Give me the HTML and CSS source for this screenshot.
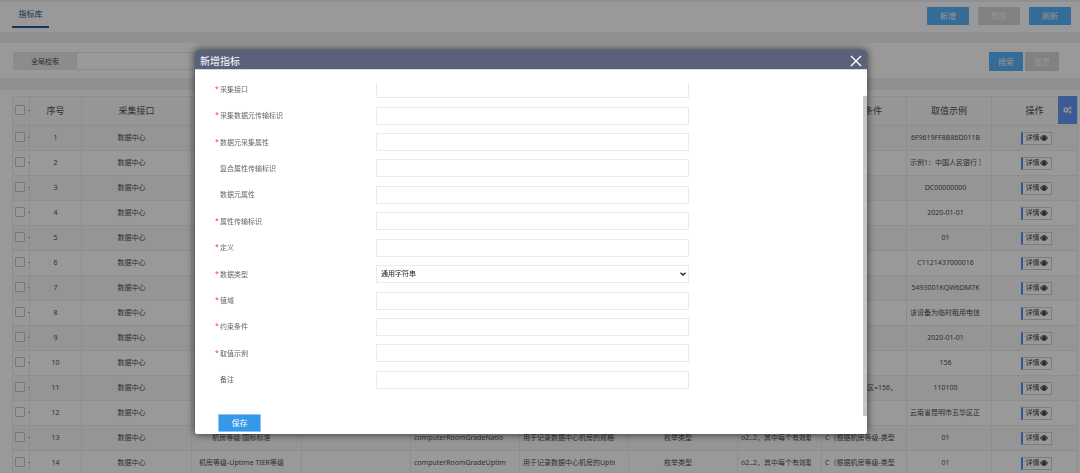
FILE: index.html
```
<!DOCTYPE html>
<html lang="zh-CN">
<head>
<meta charset="utf-8">
<title>指标库</title>
<link rel="stylesheet" href="styles.css">
</head>
<body>
<svg class="sprite" aria-hidden="true">
  <symbol id="eye" viewBox="0 0 16 12">
    <path d="M0 6C3 1.500 5.500 .5 8 .5S13 1.500 16 6c-3 4.500-5.500 5.500-8 5.500S3 10.500 0 6z" fill="currentColor"/>
    <path d="M4.500 2.500C2.500 4.500 2.500 7.500 4.500 9.500M11.500 2.500c2 2 2 5 0 7" fill="none" stroke="#fff" stroke-width="1.300"/>
    <path d="M6 5a2 2 0 0 1 2-2" fill="none" stroke="#fff" stroke-width="1"/>
  </symbol>
  <symbol id="cogs" viewBox="0 0 18 16">
    <g fill="none" stroke="currentColor">
      <circle cx="6" cy="8" r="3.500" stroke-width="2.600"/>
      <circle cx="6" cy="8" r="5.200" stroke-width="1.600" stroke-dasharray="2 2.084"/>
      <circle cx="14.300" cy="3.600" r="1.900" stroke-width="1.600"/>
      <circle cx="14.300" cy="3.600" r="3" stroke-width="1" stroke-dasharray="1.500 1.642"/>
      <circle cx="14.300" cy="12.400" r="1.900" stroke-width="1.600"/>
      <circle cx="14.300" cy="12.400" r="3" stroke-width="1" stroke-dasharray="1.500 1.642"/>
    </g>
  </symbol>
</svg>

<div class="page">
  <header class="topbar">
    <a class="tab" href="#">指标库</a>
    <div class="actions">
      <button class="btn" type="button">新增</button>
      <button class="btn btn-off" type="button">删除</button>
      <button class="btn" type="button">刷新</button>
    </div>
  </header>

  <form class="search">
    <label class="search-label" for="keyword">全局检索</label>
    <input class="search-input" id="keyword" type="text">
    <div class="search-actions">
      <button class="btn btn-search" type="button">搜索</button>
      <button class="btn btn-search btn-off" type="button">重置</button>
    </div>
  </form>

  <main class="list">
    <table class="grid">
      <colgroup>
        <col class="c-check"><col class="c-no"><col class="c-wide"><col class="c-wide"><col class="c-mid"><col class="c-mid"><col class="c-mid"><col class="c-mid"><col class="c-range"><col class="c-small"><col class="c-small"><col class="c-op">
      </colgroup>
      <thead>
        <tr><th class="check"><input type="checkbox" aria-label="全选">.</th><th>序号</th><th>采集接口</th><th></th><th></th><th></th><th></th><th></th><th></th><th>约束条件</th><th>取值示例</th><th>操作</th></tr>
      </thead>
      <tbody>
        <tr><td class="check"><input type="checkbox" aria-label="选择1">.</td><td class="no">1</td><td>数据中心</td><td></td><td></td><td></td><td></td><td></td><td></td><td></td><td class="s">6F9619FF8B86D011B</td><td class="op"><button type="button" class="detail">详情<svg><use href="#eye"/></svg></button></td></tr>
        <tr><td class="check"><input type="checkbox" aria-label="选择2">.</td><td class="no">2</td><td>数据中心</td><td></td><td></td><td></td><td></td><td></td><td></td><td></td><td class="s"><div class="clip">示例1：中国人民银行 清算</div></td><td class="op"><button type="button" class="detail">详情<svg><use href="#eye"/></svg></button></td></tr>
        <tr><td class="check"><input type="checkbox" aria-label="选择3">.</td><td class="no">3</td><td>数据中心</td><td></td><td></td><td></td><td></td><td></td><td></td><td></td><td class="s">DC00000000</td><td class="op"><button type="button" class="detail">详情<svg><use href="#eye"/></svg></button></td></tr>
        <tr><td class="check"><input type="checkbox" aria-label="选择4">.</td><td class="no">4</td><td>数据中心</td><td></td><td></td><td></td><td></td><td></td><td></td><td></td><td class="s">2020-01-01</td><td class="op"><button type="button" class="detail">详情<svg><use href="#eye"/></svg></button></td></tr>
        <tr><td class="check"><input type="checkbox" aria-label="选择5">.</td><td class="no">5</td><td>数据中心</td><td></td><td></td><td></td><td></td><td></td><td></td><td></td><td class="s">01</td><td class="op"><button type="button" class="detail">详情<svg><use href="#eye"/></svg></button></td></tr>
        <tr><td class="check"><input type="checkbox" aria-label="选择6">.</td><td class="no">6</td><td>数据中心</td><td></td><td></td><td></td><td></td><td></td><td></td><td></td><td class="s">C1121437000016</td><td class="op"><button type="button" class="detail">详情<svg><use href="#eye"/></svg></button></td></tr>
        <tr><td class="check"><input type="checkbox" aria-label="选择7">.</td><td class="no">7</td><td>数据中心</td><td></td><td></td><td></td><td></td><td></td><td></td><td></td><td class="s">5493001KQW6DM7K</td><td class="op"><button type="button" class="detail">详情<svg><use href="#eye"/></svg></button></td></tr>
        <tr><td class="check"><input type="checkbox" aria-label="选择8">.</td><td class="no">8</td><td>数据中心</td><td></td><td></td><td></td><td></td><td></td><td></td><td></td><td class="s"><div class="clip">该设备为临时租用电信</div></td><td class="op"><button type="button" class="detail">详情<svg><use href="#eye"/></svg></button></td></tr>
        <tr><td class="check"><input type="checkbox" aria-label="选择9">.</td><td class="no">9</td><td>数据中心</td><td></td><td></td><td></td><td></td><td></td><td></td><td></td><td class="s">2020-01-01</td><td class="op"><button type="button" class="detail">详情<svg><use href="#eye"/></svg></button></td></tr>
        <tr><td class="check"><input type="checkbox" aria-label="选择10">.</td><td class="no">10</td><td>数据中心</td><td></td><td></td><td></td><td></td><td></td><td></td><td></td><td class="s">156</td><td class="op"><button type="button" class="detail">详情<svg><use href="#eye"/></svg></button></td></tr>
        <tr><td class="check"><input type="checkbox" aria-label="选择11">.</td><td class="no">11</td><td>数据中心</td><td></td><td></td><td></td><td></td><td></td><td></td><td class="s"><div class="clip">C（若国家/地区=156，</div></td><td class="s">110100</td><td class="op"><button type="button" class="detail">详情<svg><use href="#eye"/></svg></button></td></tr>
        <tr><td class="check"><input type="checkbox" aria-label="选择12">.</td><td class="no">12</td><td>数据中心</td><td></td><td></td><td></td><td></td><td></td><td></td><td></td><td class="s"><div class="clip">云南省昆明市五华区正</div></td><td class="op"><button type="button" class="detail">详情<svg><use href="#eye"/></svg></button></td></tr>
        <tr><td class="check"><input type="checkbox" aria-label="选择13">.</td><td class="no">13</td><td>数据中心</td><td>机房等级-国标标准</td><td></td><td><div class="clip">computerRoomGradeNatio</div></td><td><div class="clip">用于记录数据中心机房的规格等级</div></td><td>枚举类型</td><td class="s"><div class="clip">o2..2，其中每个有效取值</div></td><td class="s"><div class="clip">C（根据机房等级-类型</div></td><td class="s">01</td><td class="op"><button type="button" class="detail">详情<svg><use href="#eye"/></svg></button></td></tr>
        <tr><td class="check"><input type="checkbox" aria-label="选择14">.</td><td class="no">14</td><td>数据中心</td><td>机房等级-Uptime TIER等级</td><td></td><td><div class="clip">computerRoomGradeUptime</div></td><td><div class="clip">用于记录数据中心机房的Uptime</div></td><td>枚举类型</td><td class="s"><div class="clip">o2..2，其中每个有效取值</div></td><td class="s"><div class="clip">C（根据机房等级-类型</div></td><td class="s">01</td><td class="op"><button type="button" class="detail">详情<svg><use href="#eye"/></svg></button></td></tr>
      </tbody>
    </table>
    <button class="columns" type="button" aria-label="列设置"><svg><use href="#cogs"/></svg></button>
  </main>
</div>

<div class="overlay">
  <section class="dialog" role="dialog" aria-labelledby="dialog-title">
    <header class="dialog-head">
      <h2 id="dialog-title">新增指标</h2>
      <button class="close" type="button" aria-label="关闭"><svg viewBox="0 0 12 12"><path d="M1 1l10 10M11 1L1 11" fill="none" stroke="#fff" stroke-width="1.400"/></svg></button>
    </header>
    <form class="dialog-form">
      <div class="viewport">
        <div class="fields">
          <div class="field"><label class="req" for="f1">采集接口</label><input id="f1" type="text"></div>
          <div class="field"><label class="req" for="f2">采集数据元传输标识</label><input id="f2" type="text"></div>
          <div class="field"><label class="req" for="f3">数据元采集属性</label><input id="f3" type="text"></div>
          <div class="field"><label for="f4">复合属性传输标识</label><input id="f4" type="text"></div>
          <div class="field"><label for="f5">数据元属性</label><input id="f5" type="text"></div>
          <div class="field"><label class="req" for="f6">属性传输标识</label><input id="f6" type="text"></div>
          <div class="field"><label class="req" for="f7">定义</label><input id="f7" type="text"></div>
          <div class="field"><label class="req" for="f8">数据类型</label>
            <div class="select"><select id="f8"><option>通用字符串</option></select><svg viewBox="0 0 6 4"><path d="M.5 .7L3 3 5.500 .7" fill="none" stroke="#222" stroke-width="1.300"/></svg></div></div>
          <div class="field"><label class="req" for="f9">值域</label><input id="f9" type="text"></div>
          <div class="field"><label class="req" for="f10">约束条件</label><input id="f10" type="text"></div>
          <div class="field"><label class="req" for="f11">取值示例</label><input id="f11" type="text"></div>
          <div class="field"><label for="f12">备注</label><input id="f12" type="text"></div>
        </div>
      </div>
      <div class="foot"><button class="save" type="button">保存</button></div>
    </form>
    <div class="thumb"></div>
  </section>
</div>
</body>
</html>
```
FILE: styles.css
```
* { box-sizing: border-box; }

body {
  margin: 0;
  overflow: hidden;
  background: #fff;
  color: #505050;
  font: 7px/10px "Noto Sans", "Noto Sans CJK SC", sans-serif;
}

button, input, select { font: inherit; margin: 0; }

.sprite { display: none; }

.page {
  height: 100vh;
  overflow: hidden;
  border-top: 2px solid #f0f0f4;
}

/* Top bar */
.topbar {
  display: flex;
  justify-content: space-between;
  height: 30px;
  padding: 5px 9px 0 12px;
}

.tab {
  width: 37px;
  height: 21px;
  padding-top: 2px;
  border-bottom: 2px solid #205a9c;
  color: #2c5580;
  font-size: 8px;
  text-align: center;
  text-decoration: none;
}

.actions { display: flex; gap: 9px; }

.btn {
  width: 42px;
  height: 18px;
  padding: 0;
  border: 0;
  border-radius: 1px;
  background: #58b2fc;
  color: #f4f4f4;
  font-size: 8px;
}

.btn-off { background: #d8d8d8; color: #f4f4f4; }

/* Search */
.search {
  display: flex;
  align-items: flex-start;
  height: 58px;
  padding: 9px 21px 0 13px;
  border: solid #f0f0f4;
  border-width: 11px 0 12px;
}

.search-label {
  width: 64px;
  height: 18px;
  border: 1px solid #e8e8e8;
  background: #eaeaea;
  line-height: 17px;
  text-align: center;
}

.search-input {
  width: 320px;
  height: 18px;
  border: 1px solid #e8e8e8;
  border-left: 0;
  background: #fff;
}

.search-actions { display: flex; gap: 2px; margin-left: auto; }
.btn-search { width: 34px; height: 19px; }

/* Table */
.list { position: relative; padding: 6px 3px 0 12px; }

.grid {
  width: 100%;
  table-layout: fixed;
  border-collapse: collapse;
}

.c-check { width: 17px; }
.c-no { width: 52px; }
.c-wide { width: 110px; }
.c-mid { width: 109px; }
.c-range { width: 84px; }
.c-small { width: 85px; }
.c-op { width: 86px; }

.grid th, .grid td {
  height: 25px;
  padding: 0 13px 0 3px;
  border: 1px solid #ededed;
  text-align: center;
  white-space: nowrap;
}

.grid th {
  height: 29px;
  padding: 0;
  background: #fafafa;
  font-size: 9px;
  font-weight: 400;
}

.grid tbody tr:nth-child(odd) { background: #f8f8f8; }
.grid td.no, .grid td.op { padding: 0; }
.grid td.s { padding-right: 10px; }
.grid .check { padding: 0 0 3px 2px; text-align: left; font-size: 7px; }
.grid td.op { padding-left: 3px; }
.clip { overflow: hidden; text-align: left; }

.check input {
  width: 10px;
  height: 10px;
  margin-right: 3px;
  appearance: none;
  border: 1px solid #c8c8c8;
  border-radius: 1px;
  background: #fff;
  vertical-align: middle;
}

.detail {
  display: inline-flex;
  align-items: center;
  height: 13px;
  padding: 0 3px;
  border: 1px solid #d0d0d0;
  border-left: 2px solid #5590ee;
  background: #fff;
  color: #404040;
  vertical-align: middle;
}

.detail svg { width: 8px; height: 6px; }

.columns {
  position: absolute;
  top: 6px;
  right: 3px;
  display: grid;
  place-items: center;
  width: 19px;
  height: 28px;
  padding: 0;
  border: 0;
  background: #6596f5;
  color: #fff;
}

.columns svg { width: 9px; height: 8px; }

/* Dialog */
.overlay {
  position: fixed;
  inset: 0;
  background: rgba(0, 0, 0, .4);
}

.dialog {
  position: absolute;
  top: 50px;
  right: 213px;
  bottom: 39px;
  left: 195px;
  display: flex;
  flex-direction: column;
  overflow: hidden;
  border-radius: 2px;
  background: #fff;
  box-shadow: 0 0 8px rgba(0, 0, 0, .7);
}

.dialog-head {
  display: flex;
  align-items: center;
  justify-content: space-between;
  height: 20px;
  padding: 2px 5px 0;
  border-bottom: 1px solid #d4d7e0;
  background: #5a617a;
  color: #fff;
}

.dialog-head h2 {
  margin: 0;
  font-size: 10px;
  line-height: 14px;
  font-weight: 400;
}

.close {
  display: grid;
  width: 12px;
  height: 12px;
  padding: 0;
  border: 0;
  background: none;
}

.dialog-form {
  display: flex;
  flex: 1;
  flex-direction: column;
  min-height: 0;
  padding-top: 13px;
}

.viewport {
  display: flex;
  flex: 1;
  flex-direction: column;
  min-height: 0;
  overflow: hidden;
}

/* The list is scrolled slightly past its first row */
.fields {
  display: grid;
  flex: 1;
  grid-auto-rows: 1fr;
  margin-top: -7px;
}

.field {
  display: flex;
  align-items: center;
  padding-left: 20px;
}

.field label {
  width: 161px;
  padding: 1px 0 0 5px;
  color: #666;
}

.field .req { padding-left: 0; }
.req::before {
  content: "*";
  display: inline-block;
  width: 5px;
  color: #f33;
  line-height: 8px;
  vertical-align: top;
}

.field input, .field select {
  width: 313px;
  height: 18px;
  padding: 0 4px;
  border: 1px solid #ebebeb;
  background: #fff;
}

.select { position: relative; display: flex; }
.field select { appearance: none; color: #222; }
.select svg {
  position: absolute;
  top: 7px;
  right: 3px;
  width: 6px;
  height: 4px;
}

.foot { padding: 21px 23px 2px; }

.save {
  display: block;
  width: 43px;
  height: 18px;
  padding: 0;
  border: 1px solid #8cc4f4;
  border-radius: 1px;
  background: #3498eb;
  color: #fff;
  font-size: 8px;
  line-height: 16px;
}

.thumb {
  position: absolute;
  top: 46px;
  right: 0;
  bottom: 18px;
  width: 4px;
  background: #c4c4c4;
}
```
